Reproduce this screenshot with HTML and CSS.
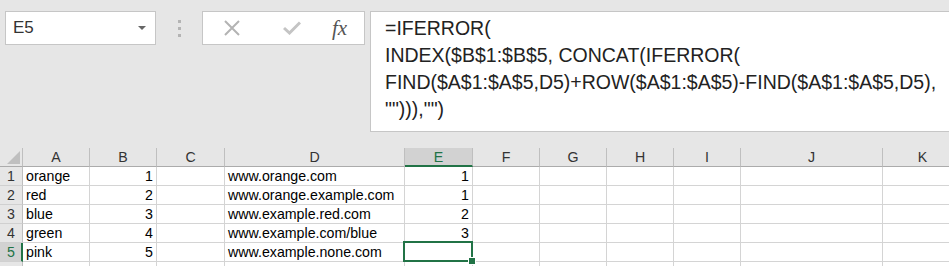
FILE: index.html
```html
<!DOCTYPE html>
<html lang="en">
<head>
    <meta charset="UTF-8">
    <title>Sheet</title>
    <link rel="stylesheet" href="styles.css">
</head>
<body>

<div class="toolbar">
    <div class="namebox">
        <span>E5</span>
        <span class="caret"></span>
    </div>
    <div class="dots"><i></i><i></i><i></i></div>
    <div class="actions">
        <svg width="18" height="18" viewBox="0 0 18 18"><path d="M2 2L16 16M16 2L2 16" stroke="#b3b3b3" stroke-width="2" fill="none"/></svg>
        <svg width="18" height="14" viewBox="0 0 18 14"><path d="M1 7L6.5 12L17 1.5" stroke="#c4c4c4" stroke-width="3" fill="none"/></svg>
        <span class="fx">fx</span>
    </div>
    <div class="formula">
        =IFERROR(<br>
        INDEX($B$1:$B$5, CONCAT(IFERROR(<br>
        FIND($A$1:$A$5,D5)+ROW($A$1:$A$5)-FIND($A$1:$A$5,D5),<br>
        ""))),"")
    </div>
</div>

<div class="sheet">
    <div class="corner"><span></span></div>
    <div class="col">A</div>
    <div class="col">B</div>
    <div class="col">C</div>
    <div class="col">D</div>
    <div class="col active">E</div>
    <div class="col">F</div>
    <div class="col">G</div>
    <div class="col">H</div>
    <div class="col">I</div>
    <div class="col">J</div>
    <div class="col">K</div>

    <div class="row">1</div>
    <div class="cell">orange</div><div class="cell num">1</div><div class="cell"></div>
    <div class="cell">www.orange.com</div><div class="cell num">1</div>
    <div class="cell"></div><div class="cell"></div><div class="cell"></div><div class="cell"></div><div class="cell"></div><div class="cell"></div>

    <div class="row">2</div>
    <div class="cell">red</div><div class="cell num">2</div><div class="cell"></div>
    <div class="cell">www.orange.example.com</div><div class="cell num">1</div>
    <div class="cell"></div><div class="cell"></div><div class="cell"></div><div class="cell"></div><div class="cell"></div><div class="cell"></div>

    <div class="row">3</div>
    <div class="cell">blue</div><div class="cell num">3</div><div class="cell"></div>
    <div class="cell">www.example.red.com</div><div class="cell num">2</div>
    <div class="cell"></div><div class="cell"></div><div class="cell"></div><div class="cell"></div><div class="cell"></div><div class="cell"></div>

    <div class="row">4</div>
    <div class="cell">green</div><div class="cell num">4</div><div class="cell"></div>
    <div class="cell">www.example.com/blue</div><div class="cell num">3</div>
    <div class="cell"></div><div class="cell"></div><div class="cell"></div><div class="cell"></div><div class="cell"></div><div class="cell"></div>

    <div class="row active">5</div>
    <div class="cell">pink</div><div class="cell num">5</div><div class="cell"></div>
    <div class="cell">www.example.none.com</div><div class="cell num selected"><span class="handle"></span></div>
    <div class="cell"></div><div class="cell"></div><div class="cell"></div><div class="cell"></div><div class="cell"></div><div class="cell"></div>

    <div class="row"></div>
    <div class="cell"></div><div class="cell"></div><div class="cell"></div><div class="cell"></div><div class="cell"></div>
    <div class="cell"></div><div class="cell"></div><div class="cell"></div><div class="cell"></div><div class="cell"></div><div class="cell"></div>
</div>

</body>
</html>
```

FILE: styles.css
```css
body {
    margin: 0;
    background: #e6e6e6;
    font-family: "Liberation Sans", Arial, sans-serif;
    color: #000;
    overflow: hidden;
}

.toolbar {
    display: flex;
    align-items: flex-start;
    padding: 11px 0 0 5px;
    height: 137px;
}

.namebox {
    width: 133px;
    height: 32px;
    background: #fff;
    border: 1px solid #c6c6c6;
    display: flex;
    align-items: center;
    justify-content: space-between;
    padding: 0 9px 0 7px;
    font-size: 17px;
    color: #333;
}

.caret {
    width: 0;
    height: 0;
    border-left: 4px solid transparent;
    border-right: 4px solid transparent;
    border-top: 4px solid #666;
}

.dots {
    width: 46px;
    height: 34px;
    display: flex;
    flex-direction: column;
    align-items: center;
    justify-content: center;
    gap: 4px;
}

.dots i {
    display: block;
    width: 3px;
    height: 3px;
    background: #b4b4b4;
}

.actions {
    width: 141px;
    height: 32px;
    background: #fff;
    border: 1px solid #c6c6c6;
    display: flex;
    align-items: center;
    padding-left: 20px;
}

.actions svg:nth-child(2) {
    margin-left: 42px;
}

.fx {
    margin-left: 31px;
    font-family: "Liberation Serif", serif;
    font-style: italic;
    font-size: 21px;
    color: #555;
}

.formula {
    flex: 1;
    margin-left: 5px;
    height: 121px;
    background: #fff;
    border: 1px solid #c6c6c6;
    border-right: none;
    padding: 3px 0 0 14px;
    box-sizing: border-box;
    font-size: 19.5px;
    line-height: 27px;
    color: #222;
    white-space: nowrap;
}

.sheet {
    display: grid;
    grid-template-columns: 23px 67px 67px 68px 180px 68px 67px 67px 67px 67px 142px 80px;
    grid-auto-rows: 19px;
    font-size: 14.2px;
}

.corner {
    background: #e6e6e6;
    border-right: 1px solid #bfbfbf;
    border-bottom: 1px solid #ababab;
    position: relative;
}

.corner span {
    position: absolute;
    right: 2px;
    bottom: 2px;
    width: 0;
    height: 0;
    border-left: 13px solid transparent;
    border-bottom: 13px solid #bfbfbf;
}

.col {
    background: #e6e6e6;
    border-right: 1px solid #bfbfbf;
    border-bottom: 1px solid #ababab;
    text-align: center;
    line-height: 19px;
    color: #333;
}

.col.active {
    background: #d2d2d2;
    color: #217346;
    border-bottom: 2px solid #217346;
    line-height: 18px;
}

.row {
    background: #e6e6e6;
    border-right: 1px solid #bfbfbf;
    border-bottom: 1px solid #d0d0d0;
    line-height: 18px;
    padding-left: 7px;
    color: #333;
}

.row.active {
    background: #d2d2d2;
    color: #217346;
    border-right: 2px solid #217346;
}

.cell {
    background: #fff;
    border-right: 1px solid #d4d4d4;
    border-bottom: 1px solid #d4d4d4;
    line-height: 18px;
    padding: 0 3px;
    white-space: nowrap;
}

.num {
    text-align: right;
}

.selected {
    position: relative;
}

.selected::after {
    content: "";
    position: absolute;
    left: -2px;
    top: -2px;
    right: -1px;
    bottom: -1px;
    border: 2px solid #217346;
}

.handle {
    position: absolute;
    right: -4px;
    bottom: -4px;
    width: 6px;
    height: 6px;
    background: #217346;
    border: 1px solid #fff;
    z-index: 1;
}
```
